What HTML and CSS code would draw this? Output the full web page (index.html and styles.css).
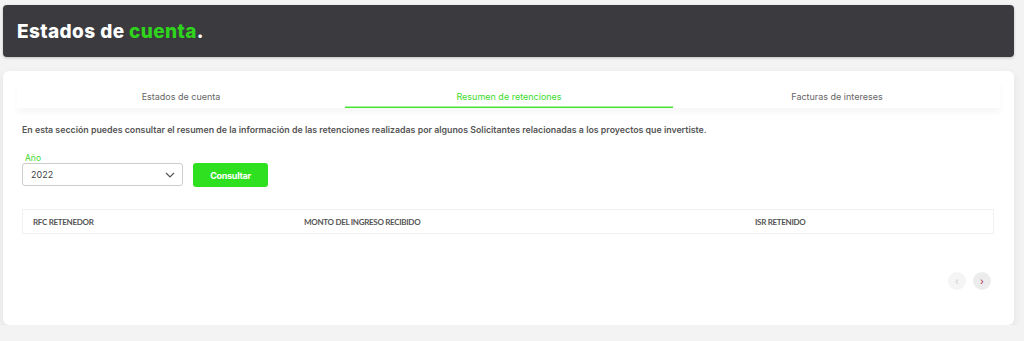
FILE: index.html
```html
<!DOCTYPE html>
<html lang="es">
<head>
    <meta charset="UTF-8">
    <meta name="viewport" content="width=device-width, initial-scale=1.0">
    <title>Estados de cuenta</title>
    <link rel="stylesheet" href="styles.css">
</head>
<body>
    <div class="page">
        <div class="header">
            <h1>Estados de <span class="green">cuenta</span>.</h1>
        </div>
        <div class="card">
            <div class="tabs">
                <div class="tab">Estados de cuenta</div>
                <div class="tab active">Resumen de retenciones</div>
                <div class="tab">Facturas de intereses</div>
            </div>
            <div class="content">
                <p class="desc">En esta sección puedes consultar el resumen de la información de las retenciones realizadas por algunos Solicitantes relacionadas a los proyectos que invertiste.</p>
                <label class="label">Año</label>
                <div class="filters">
                    <div class="select">
                        <span>2022</span>
                        <svg width="10" height="6" viewBox="0 0 10 6"><path d="M1 1l4 4 4-4" fill="none" stroke="#555" stroke-width="1.2"/></svg>
                    </div>
                    <button class="btn">Consultar</button>
                </div>
                <div class="table-head">
                    <div>RFC RETENEDOR</div>
                    <div>MONTO DEL INGRESO RECIBIDO</div>
                    <div>ISR RETENIDO</div>
                </div>
                <div class="pager">
                    <span class="circle prev">&#8249;</span>
                    <span class="circle next">&#8250;</span>
                </div>
            </div>
        </div>
    </div>
</body>
</html>
```

FILE: styles.css
```css
body{
    margin: 0;
    background: #f3f3f3;
    font-family: "Inter", sans-serif;
}
.page{padding: 5px 10px 0 3px;}
.header{
    height: 52px;
    background: #3b3b3f;
    border-radius: 4px;
    display: flex;
    align-items: center;
    padding-left: 14px;
    box-shadow: 0 1px 3px rgba(0,0,0,0.2);
}
.header h1{
    margin: 0;
    color: #fff;
    font-size: 19px;
    font-weight: 800;
    letter-spacing: 0.4px;
}
.green{color: #2fd41c;}
.card{
    margin-top: 14px;
    height: 245px;
    background: #fff;
    border-radius: 6px;
    padding: 9px 14px 0 14px;
    box-shadow: 0 3px 8px rgba(0,0,0,0.08);
}
.tabs{
    display: grid;
    grid-template-columns: 328px 328px 328px;
    box-shadow: 0 5px 6px rgba(0,0,0,0.035);
}
.tab{
    height: 28px;
    line-height: 15px;
    text-align: center;
    font-size: 9px;
    color: #666;
    box-sizing: border-box;
    padding-top: 9px;
}
.tab.active{
    color: #3ddb2c;
    box-shadow: inset 0 -1.5px 0 #45e533;
}
.content{padding: 0 6px 0 5px;}
.desc{
    margin: 16px 0 0 0;
    font-size: 8.8px;
    font-weight: 600;
    color: #555;
}
.label{
    display: block;
    margin: 18px 0 0 3px;
    font-size: 8.5px;
    color: #3ddb2c;
}
.filters{display: flex; gap: 10px;}
.select{
    width: 161px;
    height: 23px;
    box-sizing: border-box;
    border: 1px solid #ccc;
    border-radius: 3px;
    display: flex;
    align-items: center;
    justify-content: space-between;
    padding: 0 7px 0 8px;
    font-size: 9px;
    color: #444;
}
.btn{
    width: 75px;
    height: 24px;
    border: none;
    border-radius: 3px;
    background: #2ee01f;
    color: #fff;
    font-family: "Inter", sans-serif;
    font-weight: 700;
    font-size: 9px;
    letter-spacing: -0.3px;
}
.table-head{
    margin-top: 22px;
    height: 25px;
    box-sizing: border-box;
    border: 1px solid #f0f0f0;
    display: grid;
    grid-template-columns: 271px 451px 1fr;
    align-items: center;
    padding-left: 10px;
    font-family: "Lato", sans-serif;
    font-weight: 700;
    font-size: 8px;
    color: #555;
    letter-spacing: -0.3px;
}
.pager{
    display: flex;
    justify-content: flex-end;
    gap: 7px;
    margin-top: 38px;
    padding-right: 3px;
}
.circle{
    width: 18px;
    height: 18px;
    border-radius: 50%;
    display: flex;
    align-items: center;
    justify-content: center;
    font-size: 10px;
    line-height: 1;
}
.prev{background: #f5f5f5; color: #ccc;}
.next{background: #ececec; color: #a35;}
```
